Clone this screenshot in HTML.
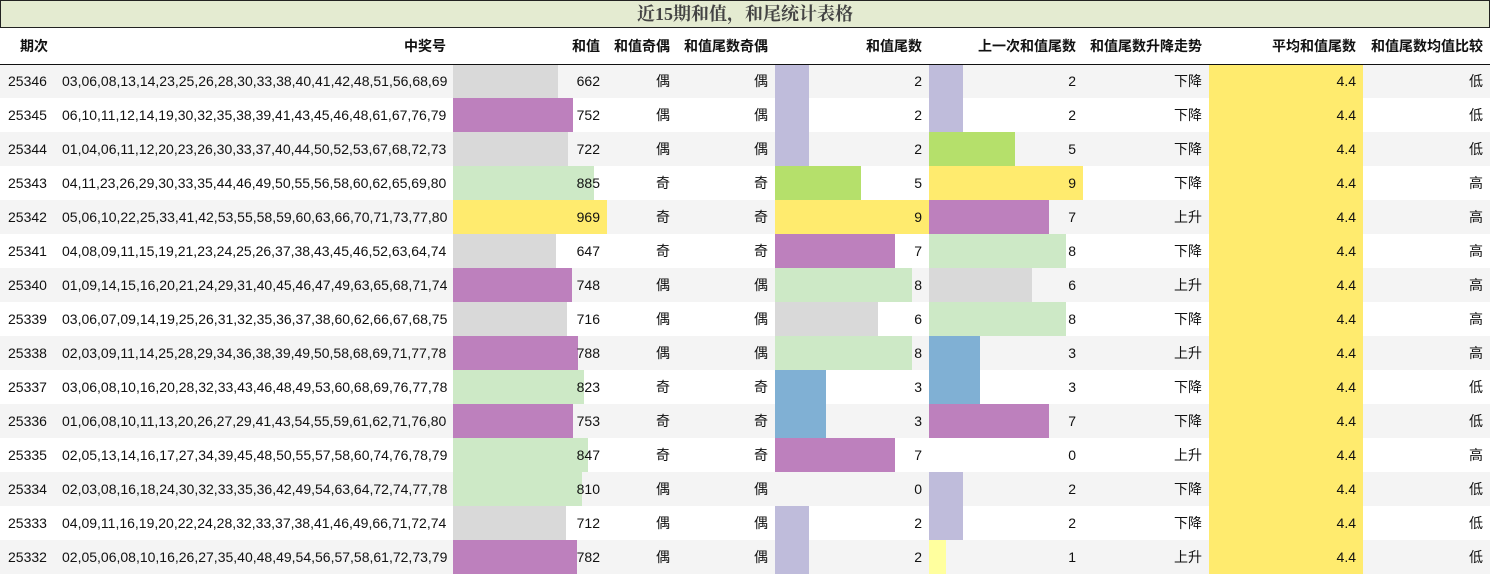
<!DOCTYPE html>
<html><head><meta charset="utf-8"><style>
*{margin:0;padding:0;box-sizing:border-box}
body{width:1490px;height:575px;overflow:hidden;background:#fff;font-family:"Liberation Sans","Noto Sans CJK SC",sans-serif;font-size:14px;color:#111}
.title{position:absolute;left:0;top:0;width:1490px;height:28px;background:#e4ebd1;border:1px solid #222;text-align:center;font:bold 18px/26px "Liberation Serif","Noto Serif CJK SC",serif;color:#444}
table{position:absolute;left:0;top:28px;border-collapse:collapse;table-layout:fixed;width:1490px}
td,th{height:34px;padding:0 7px;text-align:right;position:relative;white-space:nowrap}
th{font-weight:bold;height:36px;border-bottom:1px solid #111;font-size:14px}
td:first-child{text-align:left;padding-left:8px}
tr:nth-child(even) td{background:#f4f4f4}
td span{position:relative;z-index:1}
i{position:absolute;left:0;top:0;bottom:0;display:block}
td.av{background:#ffeb6e!important}
.g{background:#d9d9d9}.p{background:#bd80bd}.l{background:#cde9c6}.y{background:#ffeb6e}.v{background:#bfbcdb}.n{background:#b5e06b}.b{background:#80b0d4}.q{background:#ffff9e}
</style></head><body>
<div class="title">近15期和值，和尾统计表格</div>
<table>
<colgroup><col style="width:55px"><col style="width:398px"><col style="width:154px"><col style="width:70px"><col style="width:98px"><col style="width:154px"><col style="width:154px"><col style="width:126px"><col style="width:154px"><col style="width:127px"></colgroup>
<tr><th>期次</th><th>中奖号</th><th>和值</th><th>和值奇偶</th><th>和值尾数奇偶</th><th>和值尾数</th><th>上一次和值尾数</th><th>和值尾数升降走势</th><th>平均和值尾数</th><th>和值尾数均值比较</th></tr>
<tr><td>25346</td><td>03,06,08,13,14,23,25,26,28,30,33,38,40,41,42,48,51,56,68,69</td><td><i class="g" style="width:105px"></i><span>662</span></td><td>偶</td><td>偶</td><td><i class="v" style="width:34px"></i><span>2</span></td><td><i class="v" style="width:34px"></i><span>2</span></td><td>下降</td><td class="av">4.4</td><td>低</td></tr>
<tr><td>25345</td><td>06,10,11,12,14,19,30,32,35,38,39,41,43,45,46,48,61,67,76,79</td><td><i class="p" style="width:120px"></i><span>752</span></td><td>偶</td><td>偶</td><td><i class="v" style="width:34px"></i><span>2</span></td><td><i class="v" style="width:34px"></i><span>2</span></td><td>下降</td><td class="av">4.4</td><td>低</td></tr>
<tr><td>25344</td><td>01,04,06,11,12,20,23,26,30,33,37,40,44,50,52,53,67,68,72,73</td><td><i class="g" style="width:115px"></i><span>722</span></td><td>偶</td><td>偶</td><td><i class="v" style="width:34px"></i><span>2</span></td><td><i class="n" style="width:86px"></i><span>5</span></td><td>下降</td><td class="av">4.4</td><td>低</td></tr>
<tr><td>25343</td><td>04,11,23,26,29,30,33,35,44,46,49,50,55,56,58,60,62,65,69,80</td><td><i class="l" style="width:141px"></i><span>885</span></td><td>奇</td><td>奇</td><td><i class="n" style="width:86px"></i><span>5</span></td><td><i class="y" style="width:154px"></i><span>9</span></td><td>下降</td><td class="av">4.4</td><td>高</td></tr>
<tr><td>25342</td><td>05,06,10,22,25,33,41,42,53,55,58,59,60,63,66,70,71,73,77,80</td><td><i class="y" style="width:154px"></i><span>969</span></td><td>奇</td><td>奇</td><td><i class="y" style="width:154px"></i><span>9</span></td><td><i class="p" style="width:120px"></i><span>7</span></td><td>上升</td><td class="av">4.4</td><td>高</td></tr>
<tr><td>25341</td><td>04,08,09,11,15,19,21,23,24,25,26,37,38,43,45,46,52,63,64,74</td><td><i class="g" style="width:103px"></i><span>647</span></td><td>奇</td><td>奇</td><td><i class="p" style="width:120px"></i><span>7</span></td><td><i class="l" style="width:137px"></i><span>8</span></td><td>下降</td><td class="av">4.4</td><td>高</td></tr>
<tr><td>25340</td><td>01,09,14,15,16,20,21,24,29,31,40,45,46,47,49,63,65,68,71,74</td><td><i class="p" style="width:119px"></i><span>748</span></td><td>偶</td><td>偶</td><td><i class="l" style="width:137px"></i><span>8</span></td><td><i class="g" style="width:103px"></i><span>6</span></td><td>上升</td><td class="av">4.4</td><td>高</td></tr>
<tr><td>25339</td><td>03,06,07,09,14,19,25,26,31,32,35,36,37,38,60,62,66,67,68,75</td><td><i class="g" style="width:114px"></i><span>716</span></td><td>偶</td><td>偶</td><td><i class="g" style="width:103px"></i><span>6</span></td><td><i class="l" style="width:137px"></i><span>8</span></td><td>下降</td><td class="av">4.4</td><td>高</td></tr>
<tr><td>25338</td><td>02,03,09,11,14,25,28,29,34,36,38,39,49,50,58,68,69,71,77,78</td><td><i class="p" style="width:125px"></i><span>788</span></td><td>偶</td><td>偶</td><td><i class="l" style="width:137px"></i><span>8</span></td><td><i class="b" style="width:51px"></i><span>3</span></td><td>上升</td><td class="av">4.4</td><td>高</td></tr>
<tr><td>25337</td><td>03,06,08,10,16,20,28,32,33,43,46,48,49,53,60,68,69,76,77,78</td><td><i class="l" style="width:131px"></i><span>823</span></td><td>奇</td><td>奇</td><td><i class="b" style="width:51px"></i><span>3</span></td><td><i class="b" style="width:51px"></i><span>3</span></td><td>下降</td><td class="av">4.4</td><td>低</td></tr>
<tr><td>25336</td><td>01,06,08,10,11,13,20,26,27,29,41,43,54,55,59,61,62,71,76,80</td><td><i class="p" style="width:120px"></i><span>753</span></td><td>奇</td><td>奇</td><td><i class="b" style="width:51px"></i><span>3</span></td><td><i class="p" style="width:120px"></i><span>7</span></td><td>下降</td><td class="av">4.4</td><td>低</td></tr>
<tr><td>25335</td><td>02,05,13,14,16,17,27,34,39,45,48,50,55,57,58,60,74,76,78,79</td><td><i class="l" style="width:135px"></i><span>847</span></td><td>奇</td><td>奇</td><td><i class="p" style="width:120px"></i><span>7</span></td><td><span>0</span></td><td>上升</td><td class="av">4.4</td><td>高</td></tr>
<tr><td>25334</td><td>02,03,08,16,18,24,30,32,33,35,36,42,49,54,63,64,72,74,77,78</td><td><i class="l" style="width:129px"></i><span>810</span></td><td>偶</td><td>偶</td><td><span>0</span></td><td><i class="v" style="width:34px"></i><span>2</span></td><td>下降</td><td class="av">4.4</td><td>低</td></tr>
<tr><td>25333</td><td>04,09,11,16,19,20,22,24,28,32,33,37,38,41,46,49,66,71,72,74</td><td><i class="g" style="width:113px"></i><span>712</span></td><td>偶</td><td>偶</td><td><i class="v" style="width:34px"></i><span>2</span></td><td><i class="v" style="width:34px"></i><span>2</span></td><td>下降</td><td class="av">4.4</td><td>低</td></tr>
<tr><td>25332</td><td>02,05,06,08,10,16,26,27,35,40,48,49,54,56,57,58,61,72,73,79</td><td><i class="p" style="width:124px"></i><span>782</span></td><td>偶</td><td>偶</td><td><i class="v" style="width:34px"></i><span>2</span></td><td><i class="q" style="width:17px"></i><span>1</span></td><td>上升</td><td class="av">4.4</td><td>低</td></tr>
</table>
</body></html>
